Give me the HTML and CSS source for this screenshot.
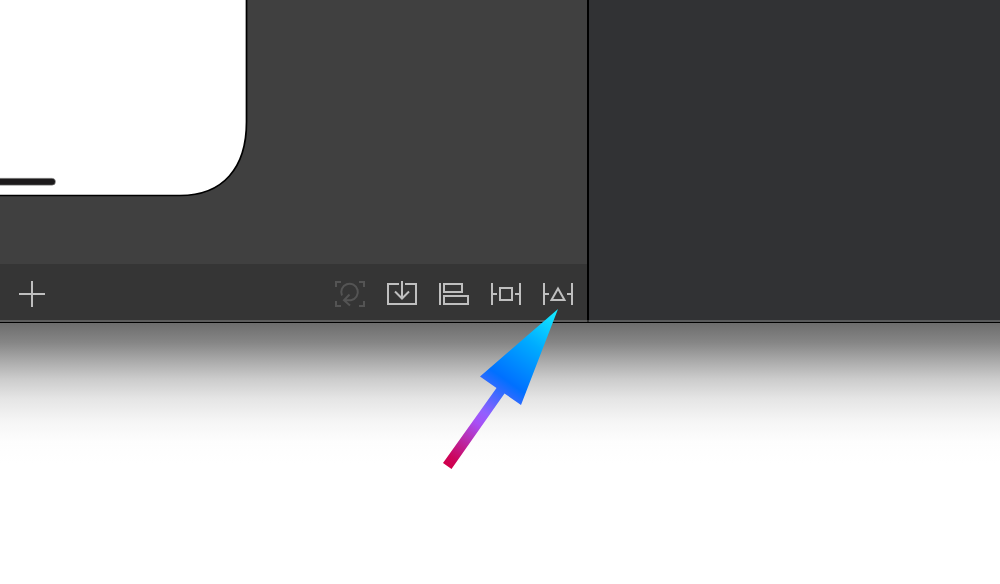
FILE: index.html
```html
<!DOCTYPE html>
<html lang="en">
<head>
<meta charset="utf-8">
<title>Interface editor</title>
<link rel="stylesheet" href="styles.css">
</head>
<body>
<main class="window">
  <section class="editor">
    <div class="canvas">
      <svg class="phone" width="250" height="200" viewBox="0 0 250 200" aria-hidden="true">
        <path d="M-4 -4H246.500V122C246.500 168 223 195.500 180 195.500H-4Z" fill="#fff" stroke="#000" stroke-width="1.700"/>
        <rect x="-20" y="178.200" width="75.500" height="7" rx="3.500" fill="#1c1a1b" stroke="#aaa" stroke-width=".5"/>
      </svg>
    </div>
    <div class="toolbar">
      <button class="tool add" type="button" aria-label="Add">
        <svg width="26" height="26" viewBox="0 0 26 26"><path d="M13 0V26M0 13H26"/></svg>
      </button>
      <div class="tools">
        <button class="tool" type="button" aria-label="Update frames" disabled>
          <svg width="30" height="26" viewBox="0 0 30 26"><path d="M1 6V1H6M24 1H29V6M1 20V25H6M24 25H29V20M7 14.500A8.300 8.300 0 1 1 16 19.200H9M14.500 13.500L9 19.200L15 24.500"/></svg>
        </button>
        <button class="tool" type="button" aria-label="Embed in">
          <svg width="30" height="26" viewBox="0 0 30 26"><path d="M12 3H1V23H29V3H18M15 0V17M8 10.500L15 17.500L22 10.500"/></svg>
        </button>
        <button class="tool" type="button" aria-label="Align">
          <svg width="30" height="26" viewBox="0 0 30 26"><path d="M1 2V24M5 3H23V11H5ZM5 15H29V23H5Z"/></svg>
        </button>
        <button class="tool" type="button" aria-label="Add new constraints">
          <svg width="30" height="26" viewBox="0 0 30 26"><path d="M1 2V24M29 2V24M2 13H6M24 13H28M9 7H21V19H9Z"/></svg>
        </button>
        <button class="tool" type="button" aria-label="Resolve Auto Layout issues">
          <svg width="30" height="26" viewBox="0 0 30 26"><path d="M1 2V24M29 2V24M2 13H6M24 13H28M15 7.500L21.500 19H8.500Z"/></svg>
        </button>
      </div>
    </div>
  </section>
  <aside class="inspector" aria-label="Inspector"></aside>
</main>
<div class="shadow"></div>
<svg class="pointer" width="120" height="164" viewBox="0 0 120 164" aria-hidden="true">
  <defs>
    <linearGradient id="pointer-fill" gradientUnits="userSpaceOnUse" x1="8" y1="160" x2="118" y2="3">
      <stop offset="0" stop-color="#d0004b"/>
      <stop offset=".05" stop-color="#cc055c"/>
      <stop offset=".27" stop-color="#a84ff5"/>
      <stop offset=".34" stop-color="#9160ff"/>
      <stop offset=".54" stop-color="#0070ff"/>
      <stop offset=".78" stop-color="#00adff"/>
      <stop offset="1" stop-color="#15efff"/>
    </linearGradient>
  </defs>
  <path d="M118 3L81 99L64.500 87.500L11.500 163L3 157L56.500 82L40 70.500Z" fill="url(#pointer-fill)"/>
</svg>
</body>
</html>
```
FILE: styles.css
```css
body {
  margin: 0;
  background: #fff;
}

.window {
  display: flex;
  position: relative;
  border-bottom: 1px solid #000;
}

/* Light rim along the lower edge, drawn over both panes. */
.window::after {
  content: "";
  position: absolute;
  inset: auto 0 0;
  height: 2px;
  background: rgba(255, 255, 255, 0.2);
}

.editor {
  flex: 587;
  background: #404040;
}

.canvas {
  padding-bottom: 64px;
}

.phone {
  display: block;
}

.toolbar {
  display: flex;
  align-items: center;
  justify-content: space-between;
  padding: 17px 14px 15px 19px;
  background: #353535;
}

.tools {
  display: flex;
  gap: 22px;
}

.tool {
  padding: 0;
  border: 0;
  background: none;
  color: #bfbfbf;
}

.tool:disabled {
  color: #545454;
}

.tool svg {
  display: block;
  fill: none;
  stroke: currentColor;
  stroke-width: 2;
}

.inspector {
  flex: 411;
  border-left: 2px solid #000;
  background: #313234;
}

.shadow {
  height: 140px;
  background: linear-gradient(#6d6d6d 0, #868686 14%, #aaaaaa 27%, #cccccc 40%, #e5e5e5 54%, #f5f5f5 70%, #fdfdfd 85%, #fff 100%);
}

/* Callout arrow lying over the toolbar and the window shadow. */
.pointer {
  position: absolute;
  top: 306px;
  left: 440px;
}
```
